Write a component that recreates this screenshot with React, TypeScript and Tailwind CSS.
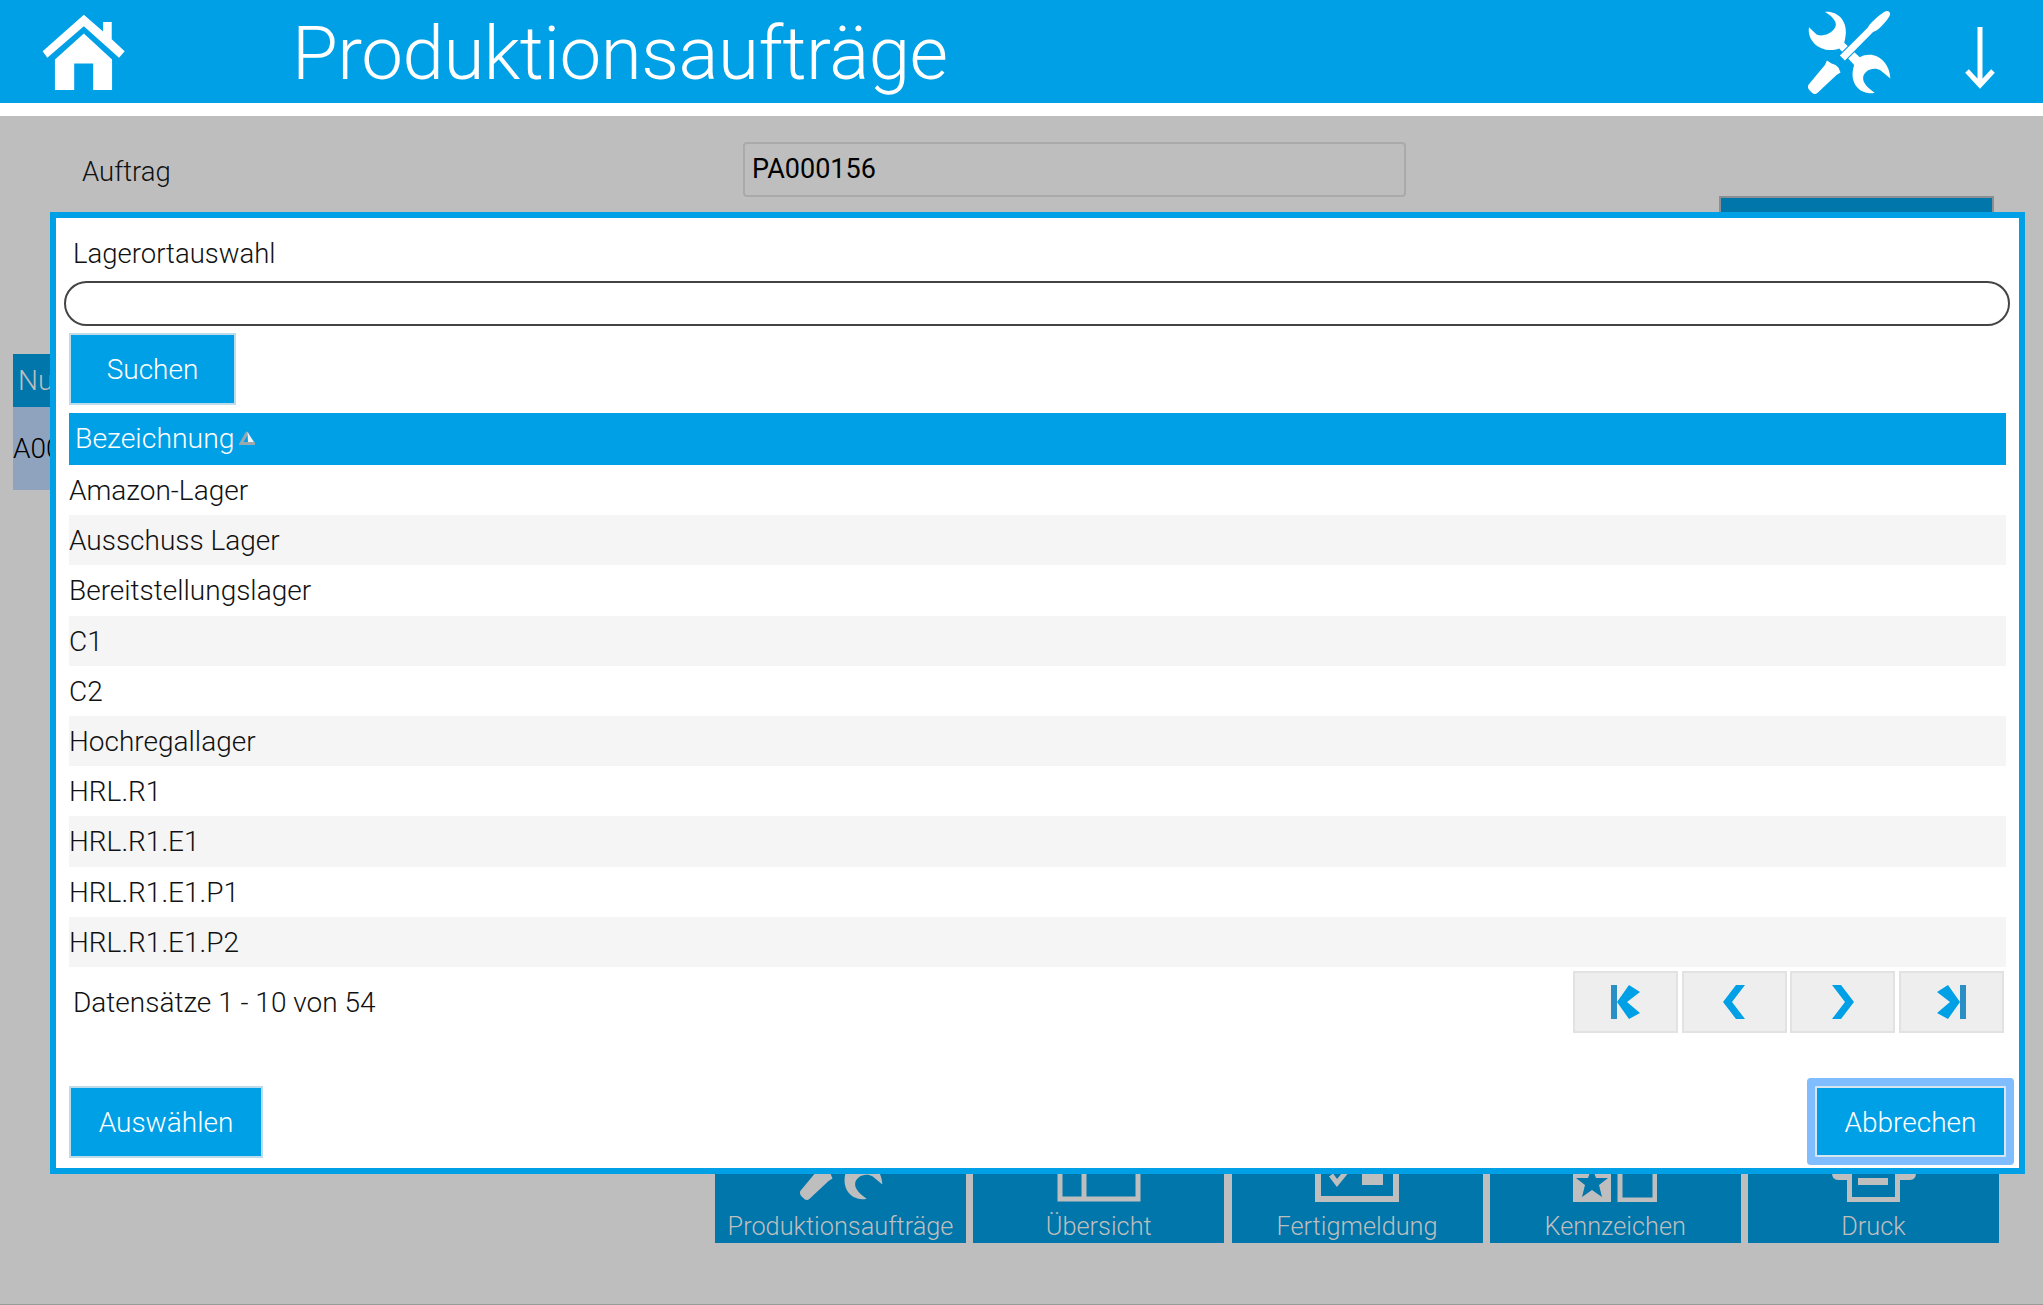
const BLUE = "#00a0e6";

function Tools({ fill, bg, className }: { fill: string; bg: string; className?: string }) {
  return (
    <svg viewBox="30 20 265 265" className={className}>
      <path fill={fill} d="M90 32 C125 28 155 55 153 95 C152 108 150 118 148 125 L195 168 C240 145 285 180 287 232 L258 208 C235 195 205 210 205 232 C205 245 220 262 240 275 C195 285 160 245 178 192 L133 142 C85 160 35 125 42 78 L65 100 C90 110 122 90 123 70 C123 55 105 40 90 32 Z" />
      <path fill={fill} stroke={bg} strokeWidth="7" paintOrder="stroke" d="M268 32 C276 26 288 28 286 40 C282 52 262 75 245 88 L235 92 L150 178 L135 163 L220 78 C225 65 250 45 268 32 Z" />
      <path fill={fill} stroke={bg} strokeWidth="7" paintOrder="stroke" d="M90 192 L96 178 L110 187 L122 192 L131 200 L137 214 L125 222 L68 275 Q60 282 52 276 L42 266 Q35 256 43 248 Z" />
    </svg>
  );
}

function Home() {
  return (
    <svg viewBox="30 15 265 245" className="w-[88px] h-[82px]">
      <path fill="#fff" d="M162 25 L220 76 L220 47 L246 47 L246 99 L285 135 L268 155 L162 60 L52 155 L38 135 Z" />
      <path fill="#fff" d="M162 82 L247 160 L247 252 L190 252 L190 172 L133 172 L133 252 L75 252 L75 160 Z" />
    </svg>
  );
}

function Pager({ points, bar, w }: { points: string; bar?: number; w: number }) {
  return (
    <button className="w-[105px] h-[62px] bg-[#eeeeee] border-2 border-[#e2e2e2] flex items-center justify-center">
      <svg viewBox={`0 0 ${w} 34`} style={{ width: w, height: 34 }}>
        {bar !== undefined && <rect x={bar} y="0" width="6" height="34" fill="#2a8fc4" />}
        <polygon points={points} fill={BLUE} />
      </svg>
    </button>
  );
}

function Tab({ label, children }: { label: string; children: React.ReactNode }) {
  return (
    <div className="w-[251px] h-[133px] bg-[#0076ab] flex flex-col items-center justify-end">
      <div className="h-[92px] flex items-end">{children}</div>
      <div className="h-[41px] flex items-center text-[25.3px] font-light text-[#bebebe] pt-[8px]">{label}</div>
    </div>
  );
}

const rows = [
  "Amazon-Lager",
  "Ausschuss Lager",
  "Bereitstellungslager",
  "C1",
  "C2",
  "Hochregallager",
  "HRL.R1",
  "HRL.R1.E1",
  "HRL.R1.E1.P1",
  "HRL.R1.E1.P2",
];

export default function App() {
  return (
    <div
      className="relative w-[2043px] h-[1305px] flex flex-col overflow-hidden bg-white text-[#111]"
      style={{ fontFamily: 'Roboto, "Liberation Sans", Arial, sans-serif' }}
    >
      <header className="h-[103px] bg-[#00a0e6] flex items-center shrink-0 text-white">
        <div className="ml-[40px] w-[88px]">
          <Home />
        </div>
        <h1 className="ml-[164px] text-[74.5px] tracking-[-0.5px] font-light leading-none mt-[6px]">Produktionsaufträge</h1>
        <div className="ml-auto flex items-center">
          <Tools fill="#fff" bg={BLUE} className="w-[88px] h-[88px]" />
          <svg viewBox="0 0 30 62" className="ml-[72px] mr-[48px] w-[30px] h-[62px] mt-[13px]">
            <path d="M15 0 V59 M2 44 L15 58 L28 44" fill="none" stroke="#fff" strokeWidth="5" />
          </svg>
        </div>
      </header>
      <div className="h-[13px] shrink-0 bg-white" />
      <main className="flex-1 flex flex-col bg-[#bebebe] border-b border-[#999] relative">
        <div className="flex items-center pt-[26px] pl-[82px]">
          <div className="w-[661px] text-[27.5px] font-light pt-[5px]">Auftrag</div>
          <div className="w-[663px] h-[55px] border-2 border-[#aaaaaa] rounded-[4px] flex items-center pl-[7px] text-[27px] text-black">
            PA000156
          </div>
        </div>
        <div className="flex justify-end pr-[49px] -mt-[1px]">
          <div className="w-[275px] h-[60px] bg-[#0076ab] border-2 border-[#8a8f93]" />
        </div>
        <div className="ml-[13px] mt-[98px] w-[37px] overflow-hidden whitespace-nowrap font-light">
          <div className="h-[53px] bg-[#0076ab] flex items-center pl-[5px] text-[28px] text-[#bebebe]">Nummer</div>
          <div className="h-[83px] bg-[#8fa3bf] flex items-center text-[28px] text-black pt-[1px]">A00001</div>
        </div>
        <div className="mt-auto pb-[61px] flex justify-end gap-[7.25px] pr-[44px]">
          <Tab label="Produktionsaufträge">
            <Tools fill="#bebebe" bg="#0076ab" className="w-[88px] h-[88px]" />
          </Tab>
          <Tab label="Übersicht">
            <svg viewBox="0 0 84 84" className="w-[84px] h-[84px]">
              <path d="M3 3 H81 V81 H3 Z M27 3 V81" fill="none" stroke="#bebebe" strokeWidth="5" />
            </svg>
          </Tab>
          <Tab label="Fertigmeldung">
            <svg viewBox="0 0 84 84" className="w-[84px] h-[84px]">
              <rect x="3" y="3" width="78" height="78" fill="none" stroke="#bebebe" strokeWidth="6" />
              <path d="M16 57 L22 65 L35 49" fill="none" stroke="#bebebe" strokeWidth="5" />
              <rect x="47" y="40" width="21" height="27" fill="#bebebe" />
            </svg>
          </Tab>
          <Tab label="Kennzeichen">
            <svg viewBox="0 0 84 84" className="w-[84px] h-[84px]">
              <rect x="0" y="30" width="38" height="54" fill="#bebebe" />
              <polygon points="19,49 23,60 35,60 26,67 29,79 19,72 9,79 12,67 3,60 15,60" fill="#0076ab" />
              <rect x="47" y="32" width="35" height="50" fill="none" stroke="#bebebe" strokeWidth="5" />
            </svg>
          </Tab>
          <Tab label="Druck">
            <svg viewBox="0 0 84 84" className="w-[84px] h-[84px]">
              <path d="M0 40 H84 V55 Q84 62 78 62 H68 V84 H15 V62 H6 Q0 62 0 55 Z" fill="#bebebe" />
              <rect x="20" y="46" width="43" height="33" fill="#0076ab" />
              <rect x="26" y="60" width="30" height="7" fill="#bebebe" />
            </svg>
          </Tab>
        </div>
      </main>

      <div className="absolute left-[50px] top-[212px] w-[1975px] h-[962px] bg-white border-[6px] border-[#00a0e6] flex flex-col text-[28px] font-light">
        <div className="pl-[17px] h-[63px] flex items-center pt-[9px] shrink-0 text-[27.5px]">Lagerortauswahl</div>
        <div className="ml-[8px] mr-[9px] h-[45px] rounded-full border-2 border-[#444] shrink-0" />
        <div className="pl-[13px] pt-[7px] shrink-0">
          <button className="w-[167px] h-[72px] bg-[#00a0e6] border-2 border-[#bcdcec] text-white pt-[2px]">Suchen</button>
        </div>
        <div className="mx-[13px] mt-[8px] shrink-0">
          <div className="h-[52px] bg-[#00a0e6] text-white flex items-center pl-[6px] text-[28.4px]">
            Bezeichnung
            <svg viewBox="0 0 18 16" className="w-[18px] h-[16px] ml-[4px] mb-[3px]">
              <path d="M8.5 2 L2 13.5 H16" fill="none" stroke="#9aa8b0" strokeWidth="3" />
              <path d="M8.5 2 L15 12 L9 12 Z" fill="#eef4f7" />
            </svg>
          </div>
          {rows.map((r, i) => (
            <div key={r} className={`h-[50.2px] flex items-center pt-[2px] ${i % 2 === 1 ? "bg-[#f5f5f5]" : "bg-white"}`}>
              {r}
            </div>
          ))}
        </div>
        <div className="mx-[13px] mt-[4px] flex shrink-0 items-start">
          <div className="pl-[4px] h-[62px] flex items-center pt-[3px]">Datensätze 1 - 10 von 54</div>
          <div className="ml-auto mr-[2px] flex gap-[3.7px]">
            <Pager w={29} bar={0} points="18,0 29,7 16,17 29,28 18,34 6,17" />
            <Pager w={22} points="0,17 13,0 22,0 9,17 22,34 13,34" />
            <Pager w={22} points="22,17 9,0 0,0 13,17 0,34 9,34" />
            <Pager w={29} bar={23} points="11,0 0,7 13,17 0,28 11,34 23,17" />
          </div>
        </div>
        <div className="mx-[13px] mt-auto mb-[10px] flex justify-between shrink-0">
          <button className="w-[194px] h-[72px] bg-[#00a0e6] border-2 border-[#bcdcec] text-white pt-[2px]">Auswählen</button>
          <button className="w-[191px] h-[71px] bg-[#00a0e6] border-2 border-[#d5e6f0] text-white ring-8 ring-[#80bdff] rounded-[1px] pt-[2px]">Abbrechen</button>
        </div>
      </div>
    </div>
  );
}
